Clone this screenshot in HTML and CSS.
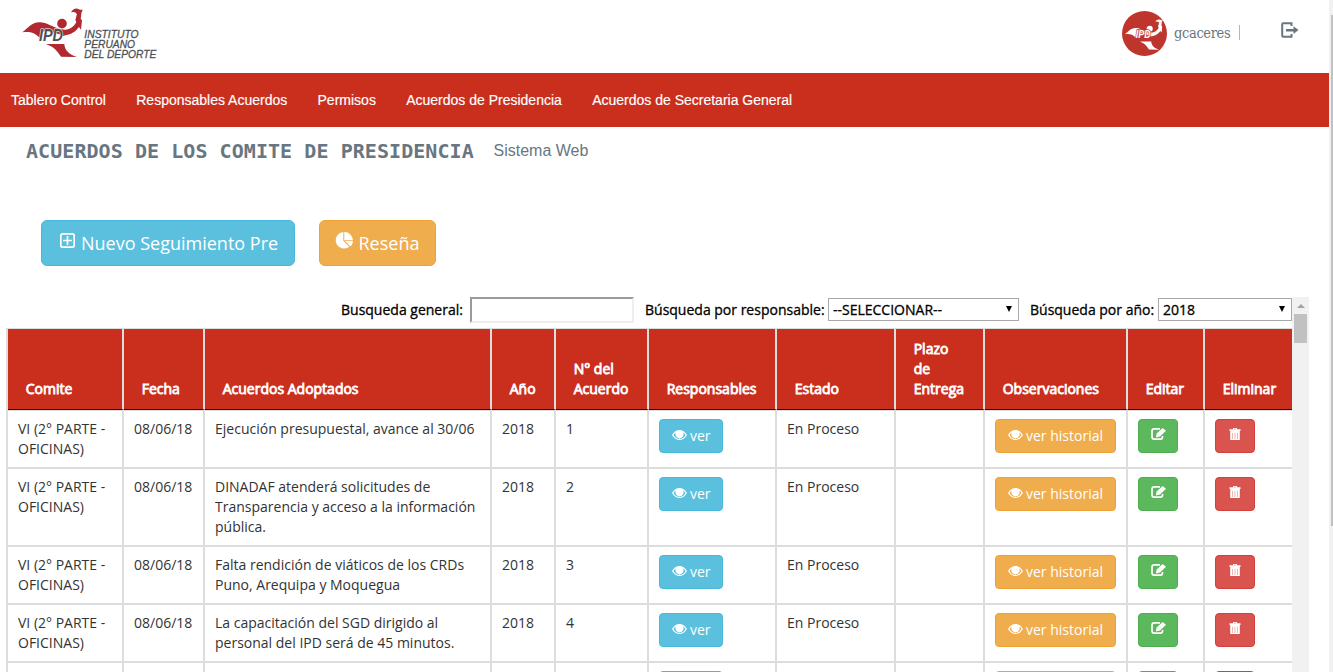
FILE: index.html
```html
<!DOCTYPE html>
<html lang="es">
<head>
<meta charset="utf-8">
<title>Acuerdos de los Comite de Presidencia</title>
<link rel="stylesheet" href="styles.css">
</head>
<body>
<svg class="defs" width="0" height="0">
  <symbol id="eye" viewBox="0 0 15 10"><path fill-rule="evenodd" d="M0 5C2 1.6 4.600 0 7.500 0S13 1.600 15 5C13 8.400 10.400 10 7.500 10S2 8.400 0 5ZM1.500 5C2.800 7.500 5 8.900 7.500 8.900S12.200 7.500 13.500 5C13 3.900 12.200 2.900 11.200 2.200A4.200 4.200 0 1 1 3.800 2.200C2.800 2.900 2 3.900 1.500 5Z"/></symbol>
  <symbol id="edit" viewBox="0 0 15 12"><path d="M9 .9H3.200Q1 .9 1 3V9Q1 11.100 3.200 11.100H9.500Q11.500 11.100 11.500 9V8" fill="none" stroke="#fff" stroke-width="1.700"/><path d="M4.800 9.500 5.700 5.600 11.600 0 15 2.800 9 8.600Z"/></symbol>
  <symbol id="trash" viewBox="0 0 12 12"><path fill-rule="evenodd" d="M4 0H8V1.300H11.500V3H.5V1.300H4ZM5 .8V1.300H7V.8Z"/><path d="M1.200 3H10.800V12H1.200Z"/><path d="M3.500 4.800V11M6 4.800V11M8.500 4.800V11" stroke="#d9534f" stroke-width=".7" opacity=".6"/></symbol>
  <symbol id="runner" viewBox="66 24 182 150">
    <path d="M67 97C84 85 95 65 122 67C146 69 164 87 197 90L192 107C165 98 146 95 133 94L124 96L119 114C105 97 88 94 67 97Z"/>
    <circle cx="186" cy="71" r="14.500"/>
    <path d="M190 91C211 88 223 79 229 66L226 60L231 41H244L242 57L246 60L243 89L237 81C227 94 216 104 188 107Z"/>
    <path d="M213 37C218 27 229 23 237 28Q242 31 249 28L243 42H230Q227 34 213 37Z"/>
    <path d="M138 133C157 131 174 133 193 132C194 150 207 164 231 171L183 170C171 152 161 140 138 133Z"/>
  </symbol>
</svg>
<div class="page">
  <main class="main">
    <header class="top">
      <svg class="logo" viewBox="0 0 540 219">
        <use href="#runner" class="logo-red" x="66" y="24" width="182" height="150"/>
        <text class="ipd" x="117" y="123" textLength="72" lengthAdjust="spacingAndGlyphs">IPD</text>
        <g class="logo-name">
          <text x="253" y="114" textLength="163" lengthAdjust="spacingAndGlyphs">INSTITUTO</text>
          <text x="253" y="143" textLength="152" lengthAdjust="spacingAndGlyphs">PERUANO</text>
          <text x="253" y="173" textLength="216" lengthAdjust="spacingAndGlyphs">DEL DEPORTE</text>
        </g>
      </svg>
      <div class="user">
        <svg class="avatar" viewBox="0 0 135 135">
          <circle cx="67.500" cy="67.500" r="67.500"/>
          <use href="#runner" class="white" x="8" y="24" width="114" height="94"/>
          <text class="avatar-ipd" x="41" y="82" textLength="45" lengthAdjust="spacingAndGlyphs">IPD</text>
        </svg>
        <span class="name">gcaceres</span><span class="sep"></span>
        <svg class="exit" viewBox="0 0 18 16"><path d="M10.500 4V1.200H2.200Q1.200 1.200 1.200 2.200V13.800Q1.200 14.800 2.200 14.800H10.500V12" fill="none" stroke="#687681" stroke-width="2"/><path fill="#687681" d="M5 6.900H12.500V4.200L17.500 8.100 12.500 12V9.500H5Z"/></svg>
      </div>
    </header>
    <nav class="nav"><a>Tablero Control</a><a>Responsables Acuerdos</a><a>Permisos</a><a>Acuerdos de Presidencia</a><a>Acuerdos de Secretaria General</a></nav>
    <div class="heading"><h1>ACUERDOS DE LOS COMITE DE PRESIDENCIA</h1><span>Sistema Web</span></div>
    <div class="actions">
      <button class="big info"><svg class="plus" viewBox="0 0 15 15"><rect x=".8" y=".8" width="13.400" height="13.400" rx="2"/><path d="M7.500 3V12M3 7.500H12"/></svg><span class="t1">Nuevo Seguimiento Pre</span></button>
      <button class="big warn"><svg class="pie" viewBox="0 0 18 17"><path d="M8.300 0V8.700L14.300 14.700A8.300 8.300 0 1 1 8.300 0ZM9.300 0A8.600 8.600 0 0 1 18 8.300H9.300ZM10 9.100H18A8 8 0 0 1 15.600 14.600Z"/></svg><span class="t2">Reseña</span></button>
    </div>
    <section class="panel">
      <div class="content">
        <div class="filters">
          <label class="l1">Busqueda general:</label><input class="search" type="text">
          <label class="l2">Búsqueda por responsable:</label><span class="select s1">--SELECCIONAR--</span>
          <label class="l3">Búsqueda por año:</label><span class="select s2">2018</span>
        </div>
        <table>
          <colgroup><col class="c1"><col class="c2"><col class="c3"><col class="c4"><col class="c5"><col class="c6"><col class="c7"><col class="c8"><col class="c9"><col class="c10"><col class="c11"></colgroup>
          <thead><tr><th>Comite</th><th>Fecha</th><th>Acuerdos Adoptados</th><th>Año</th><th>N° del Acuerdo</th><th>Responsables</th><th>Estado</th><th>Plazo<br>de<br>Entrega</th><th>Observaciones</th><th>Editar</th><th>Eliminar</th></tr></thead>
          <tbody>
            <tr><td>VI (2° PARTE - OFICINAS)</td><td>08/06/18</td><td>Ejecución presupuestal, avance al 30/06</td><td>2018</td><td>1</td><td><button class="btn info w-ver"><svg class="eye"><use href="#eye"/></svg>ver</button></td><td>En Proceso</td><td></td><td><button class="btn warn w-hist"><svg class="eye"><use href="#eye"/></svg>ver historial</button></td><td><button class="btn ok"><svg class="edit"><use href="#edit"/></svg></button></td><td><button class="btn bad"><svg class="trash"><use href="#trash"/></svg></button></td></tr>
            <tr><td>VI (2° PARTE - OFICINAS)</td><td>08/06/18</td><td>DINADAF atenderá solicitudes de<br>Transparencia y acceso a la información<br>pública.</td><td>2018</td><td>2</td><td><button class="btn info w-ver"><svg class="eye"><use href="#eye"/></svg>ver</button></td><td>En Proceso</td><td></td><td><button class="btn warn w-hist"><svg class="eye"><use href="#eye"/></svg>ver historial</button></td><td><button class="btn ok"><svg class="edit"><use href="#edit"/></svg></button></td><td><button class="btn bad"><svg class="trash"><use href="#trash"/></svg></button></td></tr>
            <tr><td>VI (2° PARTE - OFICINAS)</td><td>08/06/18</td><td>Falta rendición de viáticos de los CRDs<br>Puno, Arequipa y Moquegua</td><td>2018</td><td>3</td><td><button class="btn info w-ver"><svg class="eye"><use href="#eye"/></svg>ver</button></td><td>En Proceso</td><td></td><td><button class="btn warn w-hist"><svg class="eye"><use href="#eye"/></svg>ver historial</button></td><td><button class="btn ok"><svg class="edit"><use href="#edit"/></svg></button></td><td><button class="btn bad"><svg class="trash"><use href="#trash"/></svg></button></td></tr>
            <tr><td>VI (2° PARTE - OFICINAS)</td><td>08/06/18</td><td>La capacitación del SGD dirigido al<br>personal del IPD será de 45 minutos.</td><td>2018</td><td>4</td><td><button class="btn info w-ver"><svg class="eye"><use href="#eye"/></svg>ver</button></td><td>En Proceso</td><td></td><td><button class="btn warn w-hist"><svg class="eye"><use href="#eye"/></svg>ver historial</button></td><td><button class="btn ok"><svg class="edit"><use href="#edit"/></svg></button></td><td><button class="btn bad"><svg class="trash"><use href="#trash"/></svg></button></td></tr>
            <tr><td></td><td></td><td></td><td></td><td></td><td><button class="btn info w-ver"></button></td><td></td><td></td><td><button class="btn warn w-hist"></button></td><td><button class="btn ok"></button></td><td><button class="btn bad"></button></td></tr>
          </tbody>
        </table>
      </div>
      <div class="track"><i class="up"></i><i class="thumb"></i></div>
    </section>
  </main>
  <div class="page-track"><i></i></div>
</div>
</body>
</html>
```
FILE: styles.css
```css
* { box-sizing: border-box; }
body { margin: 0; height: 672px; overflow: hidden; background: #fff; font: 14px/20px "Open Sans", sans-serif; color: #333; }
.defs { position: absolute; }
.page { display: flex; height: 672px; overflow: hidden; }
.main { width: 1329px; flex: none; }
.page-track { width: 4px; flex: none; background: #f1f1f1; padding: 15px 0 0 2px; }
.page-track i { display: block; height: 511px; background: #c1c1c1; }

.top { height: 73px; display: flex; justify-content: space-between; }
.logo { width: 180px; height: 73px; }
.logo-red { fill: #b1292f; }
.ipd { font: italic bold 47px "Liberation Sans", sans-serif; fill: #4c5054; stroke: #fff; stroke-width: 3px; paint-order: stroke; }
.logo-name { font: italic 31px "Liberation Sans", sans-serif; fill: #4c5054; stroke: #4c5054; stroke-width: .8px; }
.user { display: flex; width: 207px; padding-top: 11px; }
.avatar { width: 45px; height: 45px; fill: #bd352d; }
.white { fill: #fff; }
.avatar-ipd { font: italic bold 30px "Liberation Sans", sans-serif; fill: #fff; stroke: #bd352d; stroke-width: 4px; paint-order: stroke; }
.name { font: 14.500px/20px "DejaVu Serif Condensed", "DejaVu Serif", serif; font-stretch: condensed; color: #687681; width: 57px; margin: 12px 0 0 7px; letter-spacing: -.35px; white-space: nowrap; }
.sep { flex: none; width: 1px; height: 15px; background: #e5ae66; margin: 14px 0 0 8px; }
.exit { width: 18px; height: 16px; margin: 11px 0 0 41px; }

.nav { height: 54px; background: #ca2f1e; display: flex; align-items: center; gap: 30.300px; padding-left: 11px; font: 14px/20px "Liberation Sans", sans-serif; color: #fff; -webkit-text-stroke: .15px #fff; }
.heading { height: 93px; display: flex; padding: 14px 0 0 26px; color: #687681; }
.heading h1 { margin: 0; width: 467.500px; font: bold 20px/20px "DejaVu Sans Mono", monospace; letter-spacing: .06px; white-space: nowrap; }
.heading span { font: 16px/20px "Liberation Sans", sans-serif; }

.actions { height: 77px; display: flex; gap: 24px; padding-left: 41px; }
button { display: flex; color: #fff; fill: #fff; border: 1px solid; font-family: "Open Sans", sans-serif; white-space: nowrap; }
.big { height: 46px; border-radius: 6px; font-size: 18px; line-height: 24px; padding: 10px 0 0 18px; }
.big.info { width: 254px; }
.big.warn { width: 117px; padding-left: 15px; }
.plus { width: 15px; height: 15px; margin: 2px 6px 0 0; fill: none; stroke: #fff; stroke-width: 1.700px; }
.pie { width: 18px; height: 17px; margin: 1px 5.500px 0 0; }
.info { background: #5bc0de; border-color: #46b8da; }
.warn { background: #f0ad4e; border-color: #eea236; }
.ok { background: #5cb85c; border-color: #4cae4c; }
.bad { background: #d9534f; border-color: #d43f3a; }

.panel { display: flex; height: 375px; margin-left: 6px; }
.content { width: 1286px; overflow: hidden; }
.filters { height: 31px; display: flex; padding-left: 335px; color: #000; -webkit-text-stroke: .3px #000; white-space: nowrap; }
.filters label { padding-top: 3px; }
.l1 { width: 129px; }
.l2 { width: 183px; margin-left: 11px; }
.l3 { width: 128px; margin-left: 11px; }
.search { width: 164px; height: 26px; border: 2px solid; border-color: #9a9a9a #eee #eee #9a9a9a; background: #fff; padding: 0; }
.select { height: 23px; margin-top: 1px; border: 1px solid #a9a9a9; padding: 1px 6px 0 4px; display: flex; justify-content: space-between; }
.select::after { content: ""; border: 3.500px solid transparent; border-top: 6px solid #000; border-bottom: 0; margin-top: 6px; height: 0; }
.s1 { width: 191px; }
.s2 { width: 134px; }

table { width: 1286px; table-layout: fixed; border-spacing: 0; border-left: 2px solid #ddd; border-top: 1px solid #ddd; }
.c1 { width: 116px; } .c2 { width: 81px; } .c3 { width: 287px; } .c4 { width: 64px; }
.c5 { width: 93px; } .c6 { width: 128px; } .c7 { width: 119px; } .c8 { width: 89px; }
.c9 { width: 143px; } .c10 { width: 77px; } .c11 { width: 87px; }
th { height: 81px; padding: 10px 0 10px 17.700px; background: #ca2f1e; color: #fff; font-weight: 400; -webkit-text-stroke: .8px #fff; text-align: left; vertical-align: bottom; border-right: 2px solid #ddd; border-bottom: 1px solid #111; }
td { padding: 8px 0 8px 10px; vertical-align: top; border-right: 2px solid #ddd; border-bottom: 2px solid #ddd; font-weight: 400; height: 58px; }
td:first-child { padding-right: 10px; }
tbody tr:first-child td { border-top: 1px solid #ddd; height: 59px; }
th:last-child, td:last-child { border-right: 0; }
.btn { height: 34px; border-radius: 4px; font-size: 14px; line-height: 20px; padding: 6px 0 0 12px; }
.eye { width: 15px; height: 10px; margin: 4px 3px 0 0; }
.ok, .bad { width: 40px; }
.edit { width: 15px; height: 12px; margin-top: 2px; }
.trash { width: 12px; height: 12px; margin: 2px 0 0 1px; }
.w-ver { width: 64px; }
.w-hist { width: 121px; }
.track { width: 17px; background: #f1f1f1; padding: 7px 2px 0; }
.up { display: block; width: 0; border: 4px solid transparent; border-top: 0; border-bottom: 4px solid #a3a3a3; margin: 0 0 6px 3px; }
.thumb { display: block; height: 29px; background: #c1c1c1; }
```
